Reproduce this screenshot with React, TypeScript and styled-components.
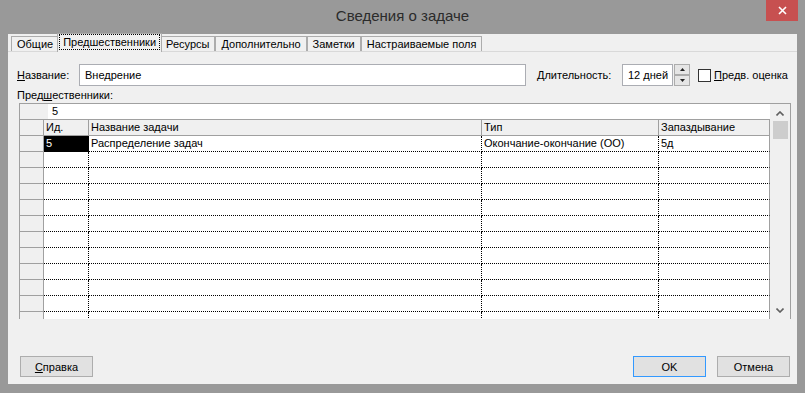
import { createGlobalStyle, styled } from 'styled-components';

const GlobalStyle = createGlobalStyle`
  html, body {
    margin: 0;
    padding: 0;
    background: #999999;
  }
  body {
    font-family: 'Liberation Sans', Arial, sans-serif;
    font-size: 11px;
    color: #000;
  }
`;

const Window = styled.div`
  width: 805px;
  height: 393px;
  background: #999999;
  display: flex;
  flex-direction: column;
  overflow: hidden;
`;

const TitleBar = styled.div`
  height: 34px;
  display: grid;
  grid-template-columns: 1fr auto 1fr;
  align-items: start;
`;

const Title = styled.div`
  grid-column: 2;
  font-size: 15px;
  line-height: 32px;
  color: #2b2b2b;
`;

const CloseButton = styled.div`
  grid-column: 3;
  justify-self: end;
  margin-right: 7px;
  width: 32px;
  height: 21px;
  background: #c75050;
  display: flex;
  align-items: center;
  justify-content: center;
`;

const Client = styled.div`
  flex: 1;
  margin: 0 8px 9px;
  background: #f0f0f0;
  display: flex;
  flex-direction: column;
`;

const TabStrip = styled.div`
  height: 17px;
  display: flex;
  align-items: flex-end;
  padding-left: 3px;
`;

const Tab = styled.div<{ $active?: boolean }>`
  position: relative;
  z-index: ${p => (p.$active ? 1 : 0)};
  height: ${p => (p.$active ? '19px' : '15px')};
  margin: ${p => (p.$active ? '0 -2px -1px' : '0')};
  padding: ${p => (p.$active ? '1px 2px 0' : '0 5px')};
  box-sizing: border-box;
  border: 1px solid #acacac;
  border-bottom: none;
  background: #f0f0f0;
  display: flex;
  align-items: ${p => (p.$active ? 'flex-start' : 'center')};
  line-height: 13px;
  white-space: nowrap;
`;

const FocusText = styled.span`
  outline: 1px dotted #000;
  outline-offset: 0;
  padding: 0 3px;
  line-height: 14px;
`;

const Panel = styled.div`
  flex: 1;
  border-top: 1px solid #d9d9d9;
  padding: 12px 0 0 9px;
  display: flex;
  flex-direction: column;
`;

const FormRow = styled.div`
  height: 22px;
  display: flex;
  align-items: center;
`;

const FieldLabel = styled.span<{ $width: number; $gap?: number }>`
  width: ${p => p.$width}px;
  margin-left: ${p => p.$gap ?? 0}px;
  flex-shrink: 0;
`;

const Key = styled.span`
  text-decoration: underline;
`;

const TextBox = styled.div<{ $width: number }>`
  width: ${p => p.$width}px;
  height: 22px;
  box-sizing: border-box;
  border: 1px solid #abadb3;
  background: #fff;
  padding-left: 5px;
  line-height: 20px;
  flex-shrink: 0;
`;

const Spin = styled.div`
  margin-left: 1px;
  width: 16px;
  height: 22px;
  display: flex;
  flex-direction: column;
  justify-content: space-between;
`;

const SpinButton = styled.div`
  height: 11px;
  box-sizing: border-box;
  border: 1px solid #acacac;
  background: #e5e5e5;
  display: flex;
  align-items: center;
  justify-content: center;
`;

const CheckBox = styled.div`
  margin-left: 8px;
  width: 13px;
  height: 13px;
  box-sizing: border-box;
  border: 1px solid #333;
  background: #fff;
`;

const CheckLabel = styled.span`
  margin-left: 3px;
`;

const SectionLabel = styled.div`
  margin-top: 2px;
  height: 15px;
  line-height: 15px;
`;

const GridFrame = styled.div`
  margin-left: 2px;
  width: 772px;
  height: 216px;
  box-sizing: border-box;
  border: 1px solid #a0a0a0;
  border-bottom: none;
  display: flex;
  background: #fff;
`;

const TableArea = styled.div`
  width: 750px;
  overflow: hidden;
  display: flex;
  flex-direction: column;
`;

const EditRow = styled.div`
  height: 16px;
  flex-shrink: 0;
  box-sizing: border-box;
  border-bottom: 1px solid #a0a0a0;
  display: flex;
`;

const EditStub = styled.div`
  width: 28px;
  background: #f0f0f0;
`;

const EditValue = styled.div`
  padding-left: 4px;
  line-height: 15px;
`;

const Row = styled.div`
  height: 16px;
  flex-shrink: 0;
  display: grid;
  grid-template-columns: 24px 45px 393px 177px 111px;
`;

const RowHead = styled.div`
  background: #f0f0f0;
  border-right: 1px solid #a0a0a0;
  border-bottom: 1px solid #a0a0a0;
`;

const HeadCell = styled.div`
  background: #f0f0f0;
  border-right: 1px solid #a0a0a0;
  border-bottom: 1px solid #a0a0a0;
  padding-left: 2px;
  line-height: 15px;
  white-space: nowrap;
  overflow: hidden;
`;

const Cell = styled.div<{ $selected?: boolean; $last?: boolean }>`
  background: ${p => (p.$selected ? '#000' : '#fff')};
  color: ${p => (p.$selected ? '#fff' : '#000')};
  border-right: ${p => (p.$last ? '1px solid #a0a0a0' : '1px dotted #000')};
  border-bottom: 1px dotted #000;
  padding-left: 2px;
  line-height: 15px;
  white-space: nowrap;
  overflow: hidden;
`;

const ScrollBar = styled.div`
  width: 20px;
  background: #f0f0f0;
  display: flex;
  flex-direction: column;
  align-items: center;
  padding-top: 7px;
  box-sizing: border-box;
`;

const Thumb = styled.div`
  margin-top: 5px;
  width: 15px;
  height: 18px;
  background: #cdcdcd;
`;

const ScrollDown = styled.div`
  margin-top: auto;
  margin-bottom: 4px;
`;

const ButtonBar = styled.div`
  height: 21px;
  margin-bottom: 7px;
  padding: 0 7px 0 12px;
  display: flex;
  align-items: center;
  justify-content: space-between;
`;

const ButtonGroup = styled.div`
  display: flex;
  gap: 11px;
`;

const Button = styled.div<{ $default?: boolean }>`
  width: 73px;
  height: 21px;
  box-sizing: border-box;
  border: 1px solid ${p => (p.$default ? '#3399ff' : '#adadad')};
  background: #e1e1e1;
  display: flex;
  align-items: center;
  justify-content: center;
`;

const Chevron = ({ up }: { up?: boolean }) => (
  <svg width="8" height="5" viewBox="0 0 8 5">
    <polyline
      points={up ? '0.5,4.5 4,1 7.5,4.5' : '0.5,0.5 4,4 7.5,0.5'}
      fill="none"
      stroke="#606060"
      strokeWidth="1.6"
    />
  </svg>
);

const Arrow = ({ up }: { up?: boolean }) => (
  <svg width="5" height="3" viewBox="0 0 5 3">
    <polygon points={up ? '0,3 2.5,0 5,3' : '0,0 5,0 2.5,3'} fill="#222" />
  </svg>
);

const tabs = ['Общие', 'Предшественники', 'Ресурсы', 'Дополнительно', 'Заметки', 'Настраиваемые поля'];

const rows = [
  { id: '5', name: 'Распределение задач', type: 'Окончание-окончание (ОО)', lag: '5д' },
  ...Array.from({ length: 11 }, () => ({ id: '', name: '', type: '', lag: '' })),
];

export default function App() {
  return (
    <>
      <GlobalStyle />
      <Window>
        <TitleBar>
          <Title>Сведения о задаче</Title>
          <CloseButton>
            <svg width="9" height="9" viewBox="0 0 9 9">
              <path d="M1 1 L8 8 M8 1 L1 8" stroke="#fff" strokeWidth="1.6" />
            </svg>
          </CloseButton>
        </TitleBar>
        <Client>
          <TabStrip>
            {tabs.map(t =>
              t === 'Предшественники' ? (
                <Tab key={t} $active>
                  <FocusText>{t}</FocusText>
                </Tab>
              ) : (
                <Tab key={t}>{t}</Tab>
              )
            )}
          </TabStrip>
          <Panel>
            <FormRow>
              <FieldLabel $width={62}><Key>Н</Key>азвание:</FieldLabel>
              <TextBox $width={447}>Внедрение</TextBox>
              <FieldLabel $width={85} $gap={11}><Key>Д</Key>лительность:</FieldLabel>
              <TextBox $width={51}>12 дней</TextBox>
              <Spin>
                <SpinButton><Arrow up /></SpinButton>
                <SpinButton><Arrow /></SpinButton>
              </Spin>
              <CheckBox />
              <CheckLabel><Key>П</Key>редв. оценка</CheckLabel>
            </FormRow>
            <SectionLabel>Пред<Key>ш</Key>ественники:</SectionLabel>
            <GridFrame>
              <TableArea>
                <EditRow>
                  <EditStub />
                  <EditValue>5</EditValue>
                </EditRow>
                <Row>
                  <RowHead />
                  <HeadCell>Ид.</HeadCell>
                  <HeadCell>Название задачи</HeadCell>
                  <HeadCell>Тип</HeadCell>
                  <HeadCell>Запаздывание</HeadCell>
                </Row>
                {rows.map((r, i) => (
                  <Row key={i}>
                    <RowHead />
                    <Cell $selected={i === 0}>{r.id}</Cell>
                    <Cell>{r.name}</Cell>
                    <Cell>{r.type}</Cell>
                    <Cell $last>{r.lag}</Cell>
                  </Row>
                ))}
              </TableArea>
              <ScrollBar>
                <Chevron up />
                <Thumb />
                <ScrollDown>
                  <Chevron />
                </ScrollDown>
              </ScrollBar>
            </GridFrame>
          </Panel>
          <ButtonBar>
            <Button><span><Key>С</Key>правка</span></Button>
            <ButtonGroup>
              <Button $default>OK</Button>
              <Button>Отмена</Button>
            </ButtonGroup>
          </ButtonBar>
        </Client>
      </Window>
    </>
  );
}
